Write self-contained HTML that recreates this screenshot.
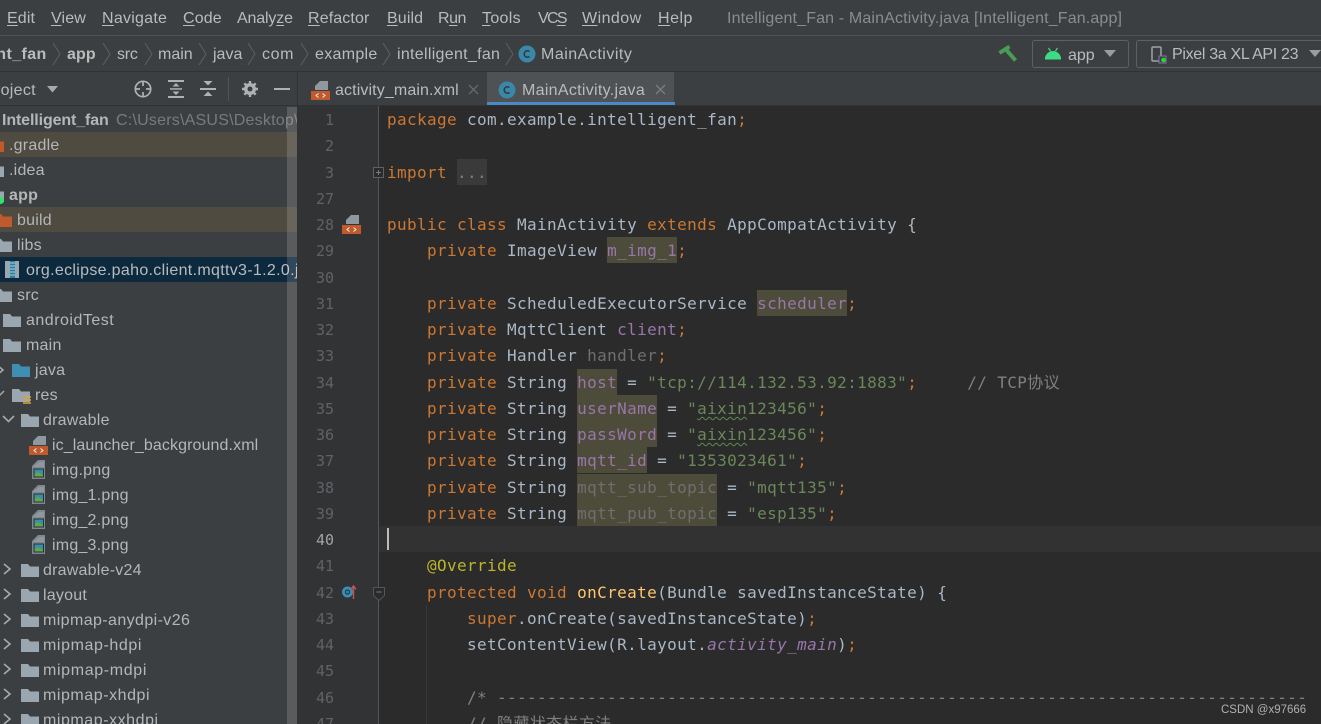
<!DOCTYPE html>
<html><head><meta charset="utf-8">
<style>
html,body{margin:0;padding:0;background:#3c3f41}
#r{position:relative;width:1321px;height:724px;overflow:hidden;background:#3c3f41;font-family:"Liberation Sans","Noto Sans CJK SC",sans-serif;font-size:16px;color:#bbbbbb}
.a{position:absolute;white-space:pre;line-height:20px}
.m{letter-spacing:.12px}
.m u{text-underline-offset:2px}
.t{position:absolute;white-space:pre;line-height:25px;height:25px;letter-spacing:.22px;color:#b4b6b8}
.b{font-weight:bold}
svg{position:absolute;overflow:visible}
.ln{position:absolute;left:300px;width:34px;text-align:right;height:26px;line-height:26px;font-family:"DejaVu Sans Mono",monospace;font-size:15px;color:#606366}
.c{position:absolute;left:387px;margin-top:1px;height:26.2px;line-height:26px;white-space:pre;font-family:"DejaVu Sans Mono","Noto Sans CJK SC",monospace;font-size:16px;letter-spacing:.37px;color:#a9b7c6}
.k{color:#cc7832}.s{color:#6a8759}.f{color:#9876aa}.u{color:#6f6f6f}
.h{display:inline-block;height:26.2px;position:relative;z-index:0}
.h::before{content:"";position:absolute;left:0;right:0;top:-1px;height:26.2px;background:#4d4b3a;z-index:-1}
.d::before{background:#3a3a3a}
.y{color:#ffc66d}.n{color:#bbb529}.g{color:#808080}.i{font-style:italic}
.w{text-decoration:underline wavy #5f8a4a 1px;text-underline-offset:2px}
</style></head><body><div id="r">
<svg width="0" height="0" style="position:absolute"><defs>
<symbol id="fo" viewBox="0 0 18 14"><path d="M0 1h7l2 2.500h9V14H0z"/></symbol>
<symbol id="ch" viewBox="0 0 10 14"><path d="M1 2l6 5-6 5" fill="none" stroke="#a7a9ab" stroke-width="1.600"/></symbol>
<symbol id="sep" viewBox="0 0 10 24"><path d="M1 1l7 11-7 11" fill="none" stroke="#5d6063" stroke-width="1"/></symbol>
<symbol id="png" viewBox="0 0 14 19"><path d="M0 6l6-6h7v19H0z" fill="#7f888f"/><path d="M1.500 7h10.500V2H7L1.500 6.500z" fill="#8f989f"/><rect x="1.500" y="8.500" width="10.500" height="9" fill="#253035"/><rect x="2.500" y="9.500" width="8.500" height="7" fill="#3a8fa8"/><path d="M2.500 16.500v-2l3-2.500 5.500 3v1.500z" fill="#62a74a"/></symbol>
<symbol id="xml" viewBox="0 0 19 19"><path d="M4 9V5l5-5h8v9z" fill="#8f989f"/><rect x="0" y="10" width="19" height="9" fill="#c0592b"/><path d="M7.500 12.500l-2.500 2 2.500 2M11.500 12.500l2.500 2-2.500 2" fill="none" stroke="#eee" stroke-width="1"/></symbol>
</defs></svg>

<!-- menu -->
<div class="a m" style="left:7px;top:9px"><u>E</u>dit</div>
<div class="a m" style="left:51px;top:9px"><u>V</u>iew</div>
<div class="a m" style="left:102px;top:9px;letter-spacing:.25px"><u>N</u>avigate</div>
<div class="a m" style="left:183px;top:9px"><u>C</u>ode</div>
<div class="a m" style="left:237px;top:9px;letter-spacing:-.15px">Analy<u>z</u>e</div>
<div class="a m" style="left:308px;top:9px"><u>R</u>efactor</div>
<div class="a m" style="left:387px;top:9px"><u>B</u>uild</div>
<div class="a m" style="left:438px;top:9px;letter-spacing:-.5px">R<u>u</u>n</div>
<div class="a m" style="left:482px;top:9px;letter-spacing:.3px"><u>T</u>ools</div>
<div class="a m" style="left:538px;top:9px;letter-spacing:-1.700px">VC<u>S</u></div>
<div class="a m" style="left:582px;top:9px;letter-spacing:.45px"><u>W</u>indow</div>
<div class="a m" style="left:658px;top:9px;letter-spacing:.5px"><u>H</u>elp</div>
<div class="a" style="left:727px;top:9px;color:#8a8c8e;letter-spacing:.15px">Intelligent_Fan - MainActivity.java [Intelligent_Fan.app]</div>
<div style="position:absolute;left:0;top:35px;width:1321px;height:1px;background:#505254"></div>

<!-- breadcrumb -->
<div class="a b" style="left:-13px;top:45px;letter-spacing:.4px">ent_fan</div>
<svg style="left:52px;top:42px" width="10" height="24"><use href="#sep"/></svg>
<div class="a b" style="left:67px;top:45px;letter-spacing:.1px">app</div>
<svg style="left:102px;top:42px" width="10" height="24"><use href="#sep"/></svg>
<div class="a" style="left:117px;top:45px;letter-spacing:-.2px">src</div>
<svg style="left:144px;top:42px" width="10" height="24"><use href="#sep"/></svg>
<div class="a" style="left:158px;top:45px">main</div>
<svg style="left:198px;top:42px" width="10" height="24"><use href="#sep"/></svg>
<div class="a" style="left:213px;top:45px">java</div>
<svg style="left:247px;top:42px" width="10" height="24"><use href="#sep"/></svg>
<div class="a" style="left:262px;top:45px;letter-spacing:.6px">com</div>
<svg style="left:300px;top:42px" width="10" height="24"><use href="#sep"/></svg>
<div class="a" style="left:315px;top:45px;letter-spacing:.3px">example</div>
<svg style="left:382px;top:42px" width="10" height="24"><use href="#sep"/></svg>
<div class="a" style="left:397px;top:45px;letter-spacing:.3px">intelligent_fan</div>
<svg style="left:505px;top:42px" width="10" height="24"><use href="#sep"/></svg>
<svg style="left:518px;top:45px" width="18" height="18" viewBox="0 0 18 18"><circle cx="9" cy="9" r="8.500" fill="#3a87a8"/><path d="M11.500 6.600a3.200 3.200 0 1 0 0 4.800" fill="none" stroke="#2d3a40" stroke-width="1.500"/></svg>
<div class="a" style="left:541px;top:45px;letter-spacing:.5px">MainActivity</div>

<!-- hammer -->
<svg style="left:990px;top:38px" width="30" height="28" viewBox="0 0 30 28" fill="none" stroke="#499c54" stroke-width="4"><path d="M9.500 15L19.500 8.500"/><path d="M16 11.500L25.500 22.500"/></svg>
<div style="position:absolute;left:1032px;top:40px;width:95px;height:26px;border:1px solid #5e6162;border-radius:3px"></div>
<svg style="left:1045px;top:47px" width="16" height="13" viewBox="0 0 16 13"><path d="M0 12a8 8 0 0 1 16 0z" fill="#3ddc84"/><path d="M3.500 1l2 3M12.500 1l-2 3" stroke="#3ddc84" stroke-width="1.200"/><rect x="0" y="10" width="16" height="2.500" fill="#3ddc84"/></svg>
<div class="a" style="left:1068px;top:46px">app</div>
<svg style="left:1104px;top:50px" width="12" height="8"><path d="M0 0h12L6 7z" fill="#9a9c9e"/></svg>
<div style="position:absolute;left:1136px;top:40px;width:200px;height:26px;border:1px solid #5e6162;border-radius:3px"></div>
<svg style="left:1151px;top:46px" width="16" height="18" viewBox="0 0 16 18"><rect x="1" y="1" width="9" height="14" rx="1" fill="none" stroke="#a0a3a5" stroke-width="1.500"/><rect x="8" y="10" width="7" height="7" fill="#3c3f41" stroke="#8a6fb0"/><circle cx="12.500" cy="14" r="2.300" fill="#1fe01f"/></svg>
<div class="a" style="left:1172px;top:45px;letter-spacing:-.32px">Pixel 3a XL API 23</div>
<svg style="left:1309px;top:50px" width="12" height="8"><path d="M0 0h12L6 7z" fill="#9a9c9e"/></svg>
<div style="position:absolute;left:0;top:71px;width:1321px;height:1px;background:#323232"></div>

<!-- project toolbar -->
<div class="a" style="left:-16px;top:81px;letter-spacing:.3px">Project</div>
<svg style="left:47px;top:86px" width="12" height="8"><path d="M0 0h11L5.500 6.500z" fill="#a7a9ab"/></svg>
<svg style="left:134px;top:80px" width="18" height="18" viewBox="0 0 18 18" fill="none" stroke="#afb1b3" stroke-width="1.700"><circle cx="9" cy="9" r="7.700"/><path d="M9 1v5M9 12v5M1 9h5M12 9h5"/></svg>
<svg style="left:168px;top:80px" width="16" height="18" viewBox="0 0 16 18" fill="#afb1b3"><rect width="16" height="2" y="0"/><rect width="16" height="2" y="16"/><rect width="12" height="1.500" x="2" y="8.200"/><path d="M8 3l3.500 3.500h-7zM8 15l-3.500-3.500h7z"/></svg>
<svg style="left:200px;top:81px" width="16" height="16" viewBox="0 0 16 16" fill="#afb1b3"><rect width="16" height="2" y="7"/><path d="M3.500 0h9L8 4.500zM3.500 15h9L8 10.500z"/></svg>
<div style="position:absolute;left:228px;top:77px;width:1px;height:24px;background:#515355"></div>
<svg style="left:242px;top:81px" width="16" height="16" viewBox="0 0 16 16"><circle cx="8" cy="8" r="4.500" fill="none" stroke="#afb1b3" stroke-width="3"/><path d="M8 0v16M0 8h16M2.300 2.300l11.400 11.400M13.700 2.300L2.300 13.700" stroke="#afb1b3" stroke-width="2.400"/><circle cx="8" cy="8" r="2.500" fill="#3c3f41"/></svg>
<div style="position:absolute;left:274px;top:88px;width:16px;height:2px;background:#afb1b3"></div>

<!-- tabs -->
<div style="position:absolute;left:297px;top:72px;width:1px;height:652px;background:#323232"></div>
<svg style="left:311px;top:81px" width="19" height="19"><use href="#xml"/></svg>
<div class="a" style="left:335px;top:81px;letter-spacing:.12px">activity_main.xml</div>
<svg style="left:468px;top:84px" width="11" height="11"><path d="M1 1l9 9M10 1l-9 9" stroke="#66696b" stroke-width="1.300"/></svg>
<div style="position:absolute;left:487px;top:72px;width:187px;height:30px;background:#4e5254"></div>
<div style="position:absolute;left:487px;top:102px;width:188px;height:4px;background:#4a88c7"></div>
<svg style="left:498px;top:81px" width="18" height="18" viewBox="0 0 18 18"><circle cx="9" cy="9" r="8.500" fill="#3a87a8"/><path d="M11.500 6.600a3.200 3.200 0 1 0 0 4.800" fill="none" stroke="#2d3a40" stroke-width="1.500"/></svg>
<div class="a" style="left:522px;top:81px;letter-spacing:.3px">MainActivity.java</div>
<svg style="left:655px;top:84px" width="11" height="11"><path d="M1 1l9 9M10 1l-9 9" stroke="#7b7e80" stroke-width="1.300"/></svg>
<div style="position:absolute;left:298px;top:105px;width:1023px;height:1px;background:#323232"></div>
<div style="position:absolute;left:0;top:105px;width:298px;height:1px;background:#323232"></div>

<!-- tree highlights -->
<div style="position:absolute;left:0;top:132px;width:297px;height:25px;background:#4f4b41"></div>
<div style="position:absolute;left:0;top:207px;width:297px;height:25px;background:#4f4b41"></div>
<div style="position:absolute;left:0;top:257px;width:297px;height:25px;background:#0d293e"></div>

<!-- tree -->
<div class="t b" style="left:2px;top:108px;letter-spacing:-.12px">Intelligent_fan</div>
<div class="t" style="left:116px;top:108px;color:#787a7c;width:181px;overflow:hidden">C:\Users\ASUS\Desktop\Intelligent_Fan</div>
<svg style="left:-14px;top:138px;fill:#c0592b" width="18" height="14"><use href="#fo"/></svg>
<div class="t" style="left:9px;top:133px">.gradle</div>
<svg style="left:-14px;top:163px;fill:#9aa7b0" width="18" height="14"><use href="#fo"/></svg>
<div class="t" style="left:9px;top:158px">.idea</div>
<svg style="left:-14px;top:188px;fill:#9aa7b0" width="18" height="14"><use href="#fo"/></svg>
<div style="position:absolute;left:-3px;top:197px;width:7px;height:7px;border-radius:50%;background:#2fe26f"></div>
<div class="t b" style="left:9px;top:183px">app</div>
<svg style="left:-6px;top:213px;fill:#c0592b" width="18" height="14"><use href="#fo"/></svg>
<div class="t" style="left:17px;top:208px">build</div>
<svg style="left:-6px;top:238px;fill:#9aa7b0" width="18" height="14"><use href="#fo"/></svg>
<div class="t" style="left:17px;top:233px">libs</div>
<svg style="left:5px;top:261px" width="14" height="17" viewBox="0 0 14 17"><rect x="0" y="0" width="14" height="17" fill="#9aa7b0"/><rect x="5" y="0" width="5" height="17" fill="#2c7da0"/><path d="M5 2h5M5 5h5M5 8h5M5 11h5M5 14h5" stroke="#9fd1e2" stroke-width="1"/></svg>
<div class="t" style="left:26px;top:258px;width:271px;overflow:hidden;color:#b8bcbf;letter-spacing:.32px">org.eclipse.paho.client.mqttv3-1.2.0.jar</div>
<svg style="left:-6px;top:288px;fill:#9aa7b0" width="18" height="14"><use href="#fo"/></svg>
<div class="t" style="left:17px;top:283px">src</div>
<svg style="left:3px;top:313px;fill:#9aa7b0" width="18" height="14"><use href="#fo"/></svg>
<div class="t" style="left:26px;top:308px;letter-spacing:.5px">androidTest</div>
<svg style="left:3px;top:338px;fill:#9aa7b0" width="18" height="14"><use href="#fo"/></svg>
<div class="t" style="left:26px;top:333px">main</div>
<svg style="left:-4px;top:363px" width="10" height="14"><use href="#ch"/></svg>
<svg style="left:12px;top:363px;fill:#3f8fb3" width="18" height="14"><use href="#fo"/></svg>
<div class="t" style="left:35px;top:358px">java</div>
<svg style="left:-4px;top:391px" width="8" height="6"><path d="M0 0l4 4 4-4" fill="none" stroke="#a7a9ab" stroke-width="1.500"/></svg>
<svg style="left:12px;top:388px;fill:#9aa7b0" width="18" height="14"><use href="#fo"/></svg>
<svg style="left:23px;top:396px" width="9" height="9"><path d="M0 1h8M0 4h8M0 7h8" stroke="#d9a343" stroke-width="1.500"/></svg>
<div class="t" style="left:35px;top:383px">res</div>
<svg style="left:3px;top:416px" width="11" height="7"><path d="M0 0l5.500 5.500L11 0" fill="none" stroke="#a7a9ab" stroke-width="1.600"/></svg>
<svg style="left:21px;top:413px;fill:#9aa7b0" width="18" height="14"><use href="#fo"/></svg>
<div class="t" style="left:43px;top:408px">drawable</div>
<svg style="left:29px;top:436px" width="19" height="19"><use href="#xml"/></svg>
<div class="t" style="left:52px;top:433px;letter-spacing:.1px">ic_launcher_background.xml</div>
<svg style="left:32px;top:460px" width="14" height="19"><use href="#png"/></svg>
<div class="t" style="left:52px;top:458px">img.png</div>
<svg style="left:32px;top:485px" width="14" height="19"><use href="#png"/></svg>
<div class="t" style="left:52px;top:483px">img_1.png</div>
<svg style="left:32px;top:510px" width="14" height="19"><use href="#png"/></svg>
<div class="t" style="left:52px;top:508px">img_2.png</div>
<svg style="left:32px;top:535px" width="14" height="19"><use href="#png"/></svg>
<div class="t" style="left:52px;top:533px">img_3.png</div>
<svg style="left:3px;top:562px" width="10" height="14"><use href="#ch"/></svg>
<svg style="left:21px;top:563px;fill:#9aa7b0" width="18" height="14"><use href="#fo"/></svg>
<div class="t" style="left:43px;top:558px">drawable-v24</div>
<svg style="left:3px;top:587px" width="10" height="14"><use href="#ch"/></svg>
<svg style="left:21px;top:588px;fill:#9aa7b0" width="18" height="14"><use href="#fo"/></svg>
<div class="t" style="left:43px;top:583px">layout</div>
<svg style="left:3px;top:612px" width="10" height="14"><use href="#ch"/></svg>
<svg style="left:21px;top:613px;fill:#9aa7b0" width="18" height="14"><use href="#fo"/></svg>
<div class="t" style="left:43px;top:608px;letter-spacing:.4px">mipmap-anydpi-v26</div>
<svg style="left:3px;top:637px" width="10" height="14"><use href="#ch"/></svg>
<svg style="left:21px;top:638px;fill:#9aa7b0" width="18" height="14"><use href="#fo"/></svg>
<div class="t" style="left:43px;top:633px;letter-spacing:.6px">mipmap-hdpi</div>
<svg style="left:3px;top:662px" width="10" height="14"><use href="#ch"/></svg>
<svg style="left:21px;top:663px;fill:#9aa7b0" width="18" height="14"><use href="#fo"/></svg>
<div class="t" style="left:43px;top:658px;letter-spacing:.65px">mipmap-mdpi</div>
<svg style="left:3px;top:687px" width="10" height="14"><use href="#ch"/></svg>
<svg style="left:21px;top:688px;fill:#9aa7b0" width="18" height="14"><use href="#fo"/></svg>
<div class="t" style="left:43px;top:683px;letter-spacing:.55px">mipmap-xhdpi</div>
<svg style="left:3px;top:712px" width="10" height="14"><use href="#ch"/></svg>
<svg style="left:21px;top:713px;fill:#9aa7b0" width="18" height="14"><use href="#fo"/></svg>
<div class="t" style="left:43px;top:708px;letter-spacing:.55px">mipmap-xxhdpi</div>
<div style="position:absolute;left:287px;top:107px;width:10px;height:617px;background:rgba(255,255,255,.15)"></div>

<!-- gutter & editor -->
<div style="position:absolute;left:298px;top:106px;width:80px;height:618px;background:#313335"></div>
<div style="position:absolute;left:378px;top:106px;width:1px;height:618px;background:#555"></div>
<div style="position:absolute;left:379px;top:106px;width:942px;height:618px;background:#2b2b2b"></div>
<div style="position:absolute;left:379px;top:526px;width:942px;height:26px;background:#323232"></div>
<div style="position:absolute;left:387px;top:528px;width:2px;height:22px;background:#bbbbbb"></div>

<div class="ln" style="top:107px">1</div><div class="ln" style="top:133px">2</div><div class="ln" style="top:160px">3</div><div class="ln" style="top:186px">27</div><div class="ln" style="top:212px">28</div><div class="ln" style="top:238px">29</div><div class="ln" style="top:265px">30</div><div class="ln" style="top:291px">31</div><div class="ln" style="top:317px">32</div><div class="ln" style="top:343px">33</div><div class="ln" style="top:370px">34</div><div class="ln" style="top:396px">35</div><div class="ln" style="top:422px">36</div><div class="ln" style="top:448px">37</div><div class="ln" style="top:475px">38</div><div class="ln" style="top:501px">39</div><div class="ln" style="top:527px;color:#a4a3a3">40</div><div class="ln" style="top:553px">41</div><div class="ln" style="top:580px">42</div><div class="ln" style="top:606px">43</div><div class="ln" style="top:632px">44</div><div class="ln" style="top:658px">45</div><div class="ln" style="top:685px">46</div><div class="ln" style="top:711px">47</div>

<svg style="left:342px;top:215px" width="19" height="19"><use href="#xml"/></svg>
<svg style="left:342px;top:585px" width="16" height="14" viewBox="0 0 16 14"><circle cx="5.500" cy="7" r="5.500" fill="#3a8fb7"/><circle cx="5.500" cy="7" r="2" fill="none" stroke="#213640" stroke-width="1.200"/><path d="M11.500 14V2M9 4.500L11.500 1 14 4.500" fill="none" stroke="#c75450" stroke-width="1.400"/></svg>
<svg style="left:373px;top:167px" width="11" height="11"><rect x=".5" y=".5" width="10" height="10" fill="#2b2b2b" stroke="#606366"/><path d="M3 5.500h5M5.500 3v5" stroke="#787a7c"/></svg>
<svg style="left:373px;top:587px" width="12" height="14"><path d="M.5.500h11v8l-5.500 5-5.500-5z" fill="#2b2b2b" stroke="#555"/><path d="M3.500 5h5" stroke="#787a7c"/></svg>
<div style="position:absolute;left:426px;top:605px;width:1px;height:119px;background:#373737"></div>

<!-- code -->
<div class="c" style="top:106px"><span class="k">package</span> com.example.intelligent_fan<span class="k">;</span></div>
<div class="c" style="top:159px"><span class="k">import</span> <span class="h d g">...</span></div>
<div class="c" style="top:211px"><span class="k">public class</span> MainActivity <span class="k">extends</span> AppCompatActivity {</div>
<div class="c" style="top:237px">    <span class="k">private</span> ImageView <span class="h f">m_img_1</span><span class="k">;</span></div>
<div class="c" style="top:290px">    <span class="k">private</span> ScheduledExecutorService <span class="h f">scheduler</span><span class="k">;</span></div>
<div class="c" style="top:316px">    <span class="k">private</span> MqttClient <span class="f">client</span><span class="k">;</span></div>
<div class="c" style="top:342px">    <span class="k">private</span> Handler <span class="u">handler</span><span class="k">;</span></div>
<div class="c" style="top:369px">    <span class="k">private</span> String <span class="h f">host</span> = <span class="s">"tcp://114.132.53.92:1883"</span><span class="k">;</span>     <span class="g">// TCP协议</span></div>
<div class="c" style="top:395px">    <span class="k">private</span> String <span class="h f">userName</span> = <span class="s">"<span class="w">aixin</span>123456"</span><span class="k">;</span></div>
<div class="c" style="top:421px">    <span class="k">private</span> String <span class="h f">passWord</span> = <span class="s">"<span class="w">aixin</span>123456"</span><span class="k">;</span></div>
<div class="c" style="top:447px">    <span class="k">private</span> String <span class="h f">mqtt_id</span> = <span class="s">"1353023461"</span><span class="k">;</span></div>
<div class="c" style="top:474px">    <span class="k">private</span> String <span class="h u">mqtt_sub_topic</span> = <span class="s">"mqtt135"</span><span class="k">;</span></div>
<div class="c" style="top:500px">    <span class="k">private</span> String <span class="h u">mqtt_pub_topic</span> = <span class="s">"esp135"</span><span class="k">;</span></div>
<div class="c" style="top:552px">    <span class="n">@Override</span></div>
<div class="c" style="top:579px">    <span class="k">protected void</span> <span class="y">onCreate</span>(Bundle savedInstanceState) {</div>
<div class="c" style="top:605px">        <span class="k">super</span>.onCreate(savedInstanceState)<span class="k">;</span></div>
<div class="c" style="top:631px">        setContentView(R.layout.<span class="f i">activity_main</span>)<span class="k">;</span></div>
<div class="c g" style="top:684px">        /* ---------------------------------------------------------------------------------</div>
<div class="c g" style="top:710px">        // 隐藏状态栏方法</div>

<div class="a" style="left:1221px;top:700px;font-size:11.500px;color:#b0b0b0">CSDN @x97666</div>
</div></body></html>
